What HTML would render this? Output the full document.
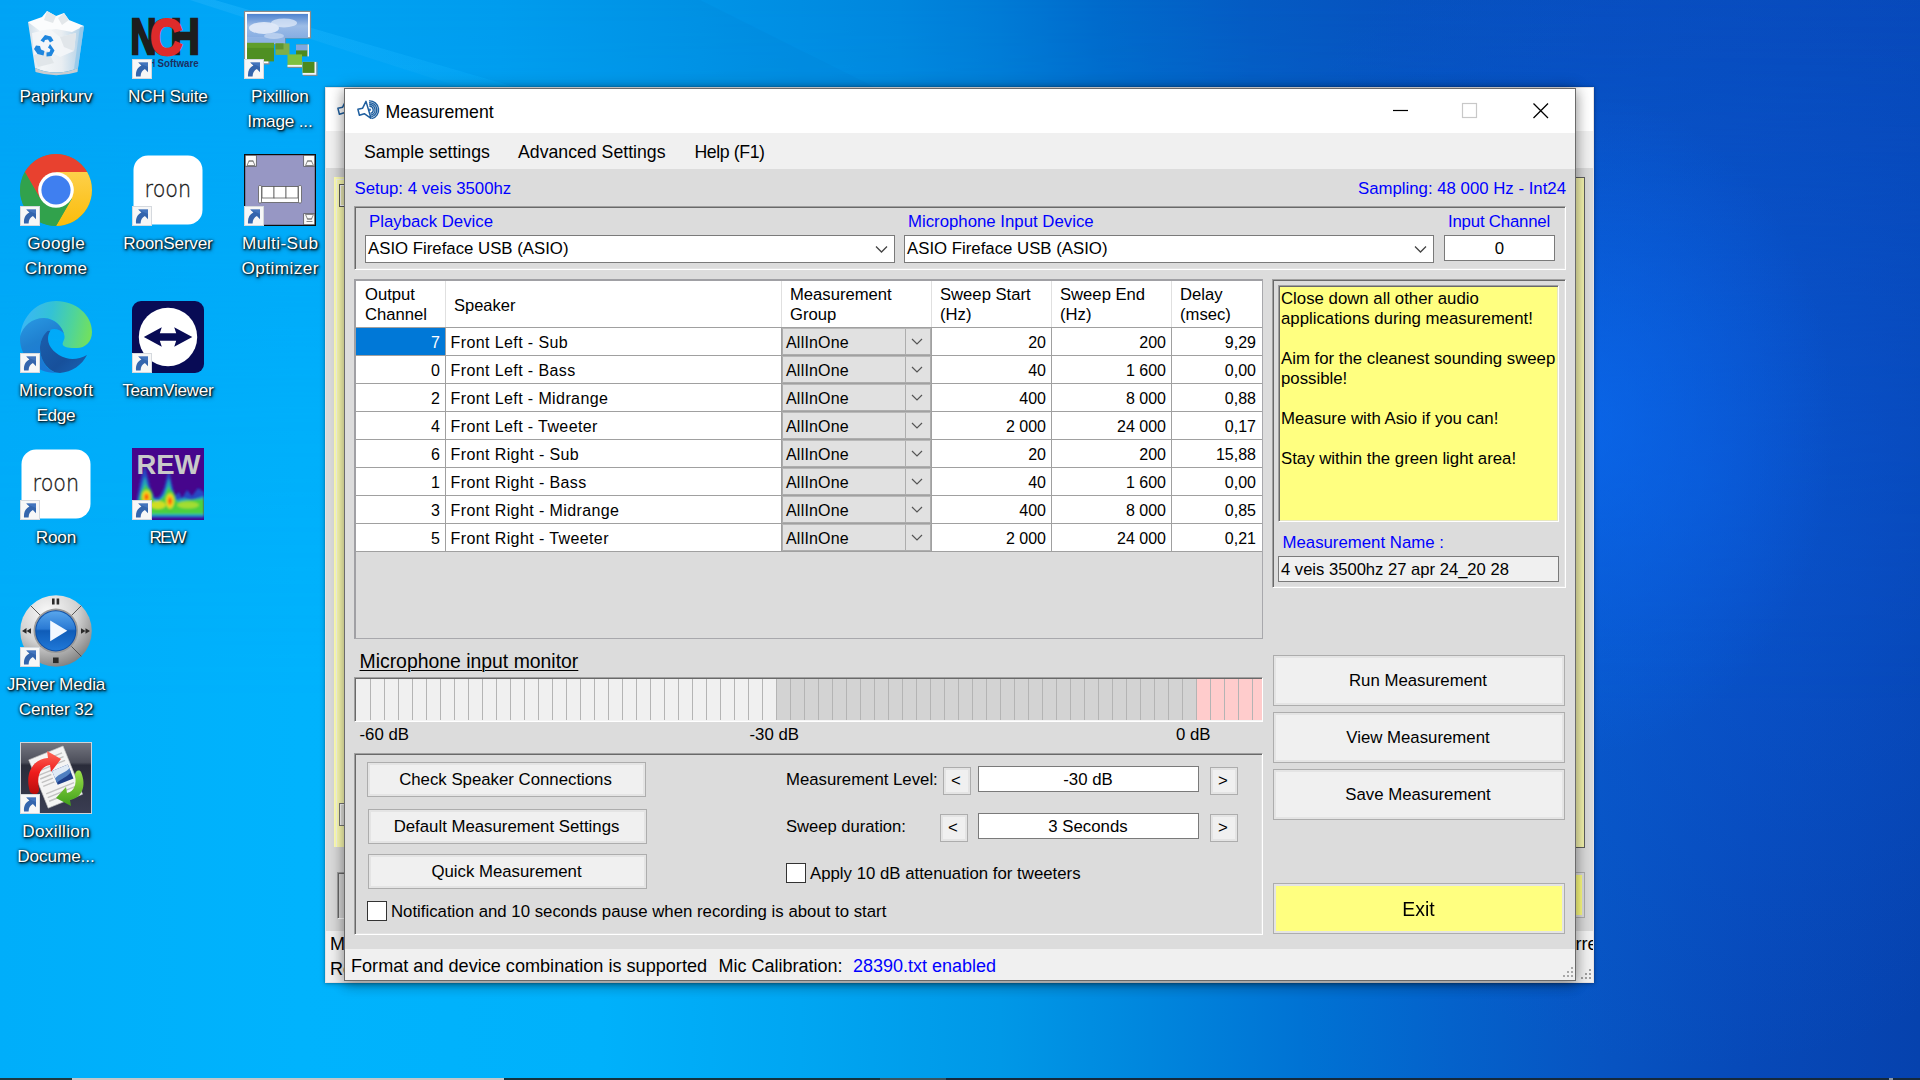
<!DOCTYPE html>
<html lang="en">
<head>
<meta charset="utf-8">
<title>Measurement</title>
<style>
*{box-sizing:border-box;margin:0;padding:0}
html,body{width:1920px;height:1080px;overflow:hidden}
body{position:relative;font-family:"Liberation Sans",sans-serif;font-size:16.8px;color:#000;
background:linear-gradient(90deg,#00aefa 0px,#00b3fd 300px,#00b1fb 600px,#00a6f2 800px,#0098e7 1000px,#0086dd 1150px,#0073d4 1300px,#0462cb 1450px,#0754c2 1600px,#0749b8 1750px,#0642ae 1920px);}
.sky{position:absolute;left:0;top:0;width:1920px;height:1080px;
 background:linear-gradient(90deg,#00a3f5 0px,#00a6f7 300px,#00a0f2 500px,#0094e7 700px,#0086dd 900px,#007ad5 1000px,#006acb 1100px,#045bc3 1250px,#0652bf 1400px,#074dbd 1600px,#0748b8 1920px);
 -webkit-mask-image:linear-gradient(180deg,#000 0px,rgba(0,0,0,.85) 120px,rgba(0,0,0,.25) 420px,rgba(0,0,0,0) 700px);
 mask-image:linear-gradient(180deg,#000 0px,rgba(0,0,0,.85) 120px,rgba(0,0,0,.25) 420px,rgba(0,0,0,0) 700px)}
.glow{position:absolute;left:0;top:0;width:1920px;height:1080px;
 background:radial-gradient(ellipse 250px 330px at 1585px 425px, rgba(10,110,248,.6), rgba(10,110,248,0) 100%),radial-gradient(ellipse 520px 600px at 1700px 470px, rgba(12,92,222,.55), rgba(12,92,222,0) 100%)}
.abs,.t,.win,.ico,.lbl,.btn,.sunk,.tb,.cell,.cb,.combo,.grp{position:absolute}
.t{white-space:pre}
.sg{font-size:17.7px}
.ico{width:72px;height:72px}
.ico svg{position:absolute;left:0;top:0;width:72px;height:72px;overflow:visible}
.lbl{width:130px;text-align:center;color:#fff;font-size:17.2px;line-height:25px;white-space:pre;
 text-shadow:1px 1px 2px rgba(0,0,0,.95),0 0 3px rgba(0,0,0,.75),1px 2px 4px rgba(0,0,0,.6)}
.win{background:#dcdcdc}
.btn{background:#f0f0f0;border:1px solid #adadad;box-shadow:inset 0 0 0 2px #e4e4e4;text-align:center;white-space:pre}
.sunk{border-style:solid;border-width:1px;border-color:#a0a0a0 #fff #fff #a0a0a0;box-shadow:inset 1px 1px 0 #696969,inset -1px -1px 0 #e3e3e3}
.tb{background:#fff;border:1px solid #7a7a7a;white-space:pre}
.cb{background:#fff;border:1px solid #333;width:20px;height:20px}
.cell{white-space:pre}
</style>
</head>
<body>
<div class="sky"></div><div class="glow"></div>
<svg class="abs" style="left:0;top:0" width="1920" height="1080" viewBox="0 0 1920 1080"><defs><linearGradient id="ray" x1="0" y1="0" x2="1" y2="0"><stop offset="0" stop-color="#7fd4ff" stop-opacity=".13"/><stop offset="1" stop-color="#7fd4ff" stop-opacity="0"/></linearGradient></defs><polygon points="190,0 215,0 560,100 500,100" fill="url(#ray)"/><polygon points="215,0 700,0 900,100 560,100" fill="#003a8c" opacity=".035"/></svg>
<div class="abs" style="left:0px;top:1078px;width:1920px;height:2px;background:#15293c"></div>
<div class="abs" style="left:0px;top:1078px;width:72px;height:2px;background:#1d3941"></div>
<div class="abs" style="left:72px;top:1078px;width:432px;height:2px;background:#c3c6c8"></div>
<div class="abs" style="left:504px;top:1078px;width:376px;height:2px;background:#13333e"></div>
<div class="abs" style="left:880px;top:1078px;width:66px;height:2px;background:#3a545f"></div>
<div class="abs" style="left:1889px;top:1078px;width:4px;height:2px;background:#8b97a7"></div>
<div class="ico" style="left:20px;top:7px"><svg viewBox="0 0 72 72"><defs><linearGradient id="bn1" x1="0" y1="0" x2="1" y2="0"><stop offset="0" stop-color="#cfdde8"/><stop offset=".25" stop-color="#f3f6f8"/><stop offset=".6" stop-color="#e9eef2"/><stop offset=".85" stop-color="#c2d9ea"/><stop offset="1" stop-color="#9fcdec"/></linearGradient></defs>
<path d="M8 15 L64 19 L58 61 Q36 70 15 61 Z" fill="url(#bn1)"/>
<path d="M15 61 Q36 70 58 61 L57.500 65 Q36 71.500 15.500 65 Z" fill="#c9ccd0"/>
<path d="M8 15 L22 10 L27 4 L36 9 L44 6 L49 13 L64 19 L52 25 L36 22 L20 24 Z" fill="#fbfcfd"/>
<path d="M27 4 L36 9 L33 16 L24 13Z M44 6 L49 13 L42 18 L38 11Z" fill="#e3e7ea"/>
<path d="M12 26 L30 22 L40 30 L56 26 L54 44 L40 50 L28 44 L14 48 Z" fill="#f4f6f8" opacity=".9"/>
<path d="M40 30 L56 26 L54 44 L44 40Z M14 48 L28 44 L34 56 L18 60Z" fill="#dfe4e8" opacity=".9"/>
<path d="M60 20 L64 19 L58 61 L54 62 Z" fill="#8ec5ea" opacity=".75"/>
<g fill="#1e86de"><path d="M20.500 33.500 l4.500-5.500 6 1.500 2.500 4 -3.500 2 -2-3 -3 .5 -1 2.500z"/><path d="M30 37 l4.500 6.500 -3 5.500 -5 .5 0-4 3-.5 1-2.500 -2.500-2z"/><path d="M16 38.500 l4 .5 1 3.500 3.500 1.500 -1 4.500 -6-1.500 -3.500-5z"/></g>
</svg></div>
<div class="lbl" style="left:-9px;top:83.54px"><span style="letter-spacing:0.03px;margin-right:-0.03px">Papirkurv</span></div>
<div class="ico" style="left:132px;top:7px"><svg viewBox="0 0 72 72">
<g font-family="Liberation Sans,sans-serif" font-weight="bold">
<text transform="translate(-1.600,47.300) scale(1,1.370)" font-size="36" fill="#1d1d1d" stroke="#1d1d1d" stroke-width="1.800">N</text>
<text transform="translate(38.600,47.300) scale(1.130,1.370)" font-size="36" fill="#1d1d1d" stroke="#1d1d1d" stroke-width="1.800">H</text>
<text transform="translate(18.400,47.600) scale(1.220,1.400)" font-size="36" fill="#de2b2b" stroke="#de2b2b" stroke-width="2.200">C</text>
<text x="25.600" y="60.400" font-size="10" fill="#1c2f62" textLength="41" lengthAdjust="spacingAndGlyphs">Software</text>
<text x="8" y="60.400" font-size="10" fill="#1c2f62" textLength="15" lengthAdjust="spacingAndGlyphs">NCH</text>
</g><g transform="translate(0,52)"><rect x="0.500" y="0.500" width="19" height="19" fill="#f7f7f7" stroke="#d5d9de" stroke-width="1"/><path d="M6.200 3.400 H16 V13.200 L12.900 10.100 C10.200 11.400 8.800 13.800 8.600 17.400 H4 C3.600 12 5.600 8.400 9.400 6.600 Z" fill="#3465ad"/><path d="M6.200 3.400 H16 V8 C12 6 9 5.500 6.200 3.400Z" fill="#4a7cc4" opacity=".7"/></g></svg></div>
<div class="lbl" style="left:103px;top:83.54px"><span style="letter-spacing:-0.17px;margin-right:0.17px">NCH Suite</span></div>
<div class="ico" style="left:244px;top:7px"><svg viewBox="0 0 72 72"><defs><linearGradient id="sky1" x1="0" y1="0" x2="0" y2="1"><stop offset="0" stop-color="#4d82cf"/><stop offset=".5" stop-color="#9dbce6"/><stop offset="1" stop-color="#86ade2"/></linearGradient></defs>
<g transform="translate(0,0.900)"><path d="M0.500 3.500 H66.500 V30 H41 V36 H25 V56 H0.500 Z" fill="#fff" stroke="#8a8a8a" stroke-width="1.200"/>
<rect x="3" y="6" width="61" height="24" fill="url(#sky1)"/><rect x="3" y="30" width="38" height="6" fill="#8fb4e4"/>
<ellipse cx="20" cy="20" rx="15" ry="6" fill="#edf3fb" opacity=".8"/><ellipse cx="40" cy="15" rx="13" ry="4.500" fill="#dfe9f8" opacity=".75"/><ellipse cx="30" cy="28" rx="10" ry="3" fill="#c9daf2" opacity=".7"/>
<rect x="3" y="35" width="27" height="18.500" fill="#4f8f22"/><rect x="3" y="35" width="27" height="5" fill="#5f9e2a"/><rect x="25" y="45" width="5" height="9" fill="#00a8f5" opacity="0"/>
<rect x="31.500" y="35.500" width="14" height="11.500" fill="#7fae48"/><rect x="31.500" y="35.500" width="8" height="6" fill="#5e9330"/>
<rect x="52" y="36.500" width="11.500" height="12" fill="#4d8a20"/><rect x="52" y="36.500" width="11.500" height="6" fill="#7fa7e0"/><rect x="63.500" y="36.500" width="1.500" height="12" fill="#e8e8e8"/>
<rect x="43.500" y="46.500" width="14.500" height="12.500" fill="#7fc03e"/><rect x="43.500" y="57" width="14.500" height="2" fill="#f4f4f4"/><rect x="43.500" y="59" width="14.500" height="1" fill="#8a8a8a"/>
<rect x="58.500" y="54" width="14" height="13" fill="#f4f4f4"/><rect x="58.500" y="54" width="12" height="11" fill="#4c8a1f"/><rect x="59" y="67" width="14" height="1" fill="#8a8a8a"/><rect x="72.500" y="54" width="1" height="14" fill="#8a8a8a"/>
</g><g transform="translate(0,52)"><rect x="0.500" y="0.500" width="19" height="19" fill="#f7f7f7" stroke="#d5d9de" stroke-width="1"/><path d="M6.200 3.400 H16 V13.200 L12.900 10.100 C10.200 11.400 8.800 13.800 8.600 17.400 H4 C3.600 12 5.600 8.400 9.400 6.600 Z" fill="#3465ad"/><path d="M6.200 3.400 H16 V8 C12 6 9 5.500 6.200 3.400Z" fill="#4a7cc4" opacity=".7"/></g></svg></div>
<div class="lbl" style="left:215px;top:83.54px"><span style="letter-spacing:-0.05px;margin-right:0.05px">Pixillion</span>
<span style="letter-spacing:-0.18px;margin-right:0.18px">Image ...</span></div>
<div class="ico" style="left:20px;top:154px"><svg viewBox="0 0 72 72"><defs><linearGradient id="cy" x1="0" y1="0" x2="0" y2="1"><stop offset="0" stop-color="#fdd04a"/><stop offset="1" stop-color="#fbbc0a"/></linearGradient></defs>
<circle cx="36" cy="36" r="35.900" fill="#34a853"/>
<path d="M36 18 H67.180 A36 36 0 0 0 4.820 18 L20.410 45 Z" fill="#e8412f"/>
<path d="M51.590 45 L36 72 A36 36 0 0 0 67.180 18 H36 Z" fill="url(#cy)"/>
<path d="M20.410 45 L4.820 18 A36 36 0 0 0 36 72 L51.590 45 Z" fill="#31a24c"/>
<circle cx="36" cy="36" r="17.800" fill="#fff"/><circle cx="36" cy="36" r="14.600" fill="#3f7ff0"/><g transform="translate(0,52)"><rect x="0.500" y="0.500" width="19" height="19" fill="#f7f7f7" stroke="#d5d9de" stroke-width="1"/><path d="M6.200 3.400 H16 V13.200 L12.900 10.100 C10.200 11.400 8.800 13.800 8.600 17.400 H4 C3.600 12 5.600 8.400 9.400 6.600 Z" fill="#3465ad"/><path d="M6.200 3.400 H16 V8 C12 6 9 5.500 6.200 3.400Z" fill="#4a7cc4" opacity=".7"/></g></svg></div>
<div class="lbl" style="left:-9px;top:230.54px"><span style="letter-spacing:0.41px;margin-right:-0.41px">Google</span>
<span style="letter-spacing:0.23px;margin-right:-0.23px">Chrome</span></div>
<div class="ico" style="left:132px;top:154px"><svg viewBox="0 0 72 72"><rect x="1.500" y="1.500" width="69" height="69" rx="14.500" fill="#fff"/>
<text x="12.600" y="42.800" font-family="DejaVu Sans,Liberation Sans,sans-serif" font-weight="200" font-size="22.800" fill="#1a1a1a" stroke="#1a1a1a" stroke-width=".350" textLength="46.500" lengthAdjust="spacingAndGlyphs">roon</text><g transform="translate(0,52)"><rect x="0.500" y="0.500" width="19" height="19" fill="#f7f7f7" stroke="#d5d9de" stroke-width="1"/><path d="M6.200 3.400 H16 V13.200 L12.900 10.100 C10.200 11.400 8.800 13.800 8.600 17.400 H4 C3.600 12 5.600 8.400 9.400 6.600 Z" fill="#3465ad"/><path d="M6.200 3.400 H16 V8 C12 6 9 5.500 6.200 3.400Z" fill="#4a7cc4" opacity=".7"/></g></svg></div>
<div class="lbl" style="left:103px;top:230.54px"><span style="letter-spacing:-0.25px;margin-right:0.25px">RoonServer</span></div>
<div class="ico" style="left:244px;top:154px"><svg viewBox="0 0 72 72"><rect x="0.600" y="0.600" width="70.800" height="70.800" fill="#9797c4" stroke="#0c0c0c" stroke-width="1.200"/>
<g fill="#fafafa" stroke="#4a4a4a" stroke-width=".7"><rect x="1.300" y="1.300" width="11" height="11"/><rect x="59.700" y="1.300" width="11" height="11"/><rect x="59.700" y="59.700" width="11" height="11"/></g>
<g fill="none" stroke="#6a6a6a" stroke-width=".8"><path d="M3 11.500 l2-4.500 h4 l2 4.500z M4.500 7 h5"/><path d="M61.500 11.500 l2-4.500 h4 l2 4.500z M63 7 h5"/><path d="M61.500 60.500 l2 4.500 h4 l2-4.500z M63 65 h5 M62.500 67.500 h6"/></g>
<g fill="#fff" stroke="#5c5c5c" stroke-width=".8"><rect x="17" y="32.500" width="38" height="16" /><rect x="18" y="32.500" width="12" height="11.500"/><rect x="30" y="32.500" width="12" height="11.500"/><rect x="42" y="32.500" width="12" height="11.500"/><rect x="14.500" y="31.500" width="3" height="17.500" rx="1.200"/><rect x="54.500" y="31.500" width="3" height="17.500" rx="1.200"/></g><g transform="translate(0,52)"><rect x="0.500" y="0.500" width="19" height="19" fill="#f7f7f7" stroke="#d5d9de" stroke-width="1"/><path d="M6.200 3.400 H16 V13.200 L12.900 10.100 C10.200 11.400 8.800 13.800 8.600 17.400 H4 C3.600 12 5.600 8.400 9.400 6.600 Z" fill="#3465ad"/><path d="M6.200 3.400 H16 V8 C12 6 9 5.500 6.200 3.400Z" fill="#4a7cc4" opacity=".7"/></g></svg></div>
<div class="lbl" style="left:215px;top:230.54px"><span style="letter-spacing:0.42px;margin-right:-0.42px">Multi-Sub</span>
<span style="letter-spacing:0.44px;margin-right:-0.44px">Optimizer</span></div>
<div class="ico" style="left:20px;top:301px"><svg viewBox="0 0 72 72"><defs>
<linearGradient id="eA" x1="0" y1=".4" x2="1" y2=".55"><stop offset="0" stop-color="#3bb6f6"/><stop offset=".4" stop-color="#33c2d6"/><stop offset=".72" stop-color="#4fd49a"/><stop offset="1" stop-color="#72e05e"/></linearGradient>
<linearGradient id="eB" x1="0" y1="0" x2=".4" y2="1"><stop offset="0" stop-color="#2a9ae4"/><stop offset=".5" stop-color="#1f80d0"/><stop offset="1" stop-color="#1a78d6"/></linearGradient>
<linearGradient id="eC" x1="0" y1="0" x2="1" y2="1"><stop offset="0" stop-color="#1b5fae"/><stop offset=".6" stop-color="#17509b"/><stop offset="1" stop-color="#1a63b4"/></linearGradient></defs>
<path d="M0 38 C1 24 12 16.500 24 17 C34 17.500 42 24 44.500 33 C40 28 34 27 30 29 C24 32 20 40 20 47 C20 60 28 70 37 72 C16 72.500 0 56 0 38 Z" fill="url(#eB)"/>
<path d="M0.300 35 C2 15 17 0 36 0 C56 0 72 14 72 31 C72 41 65 47 57 47 C50 47 43.500 46.500 42.700 43.500 C42.200 41 45 39 44.500 35 C43 25 34 17 24 17 C12 17 3 25 0.300 35 Z" fill="url(#eA)"/>
<path d="M27.500 30 C22 35 20 42 20 47 C20 61 30 72 40 72 C52 71 62 64 67 54 C60 58 52 59 46 57 C36 54 28 46 28 38 C28 35 28.500 32.500 30.500 29.500 Z" fill="url(#eC)"/>
<g transform="translate(0,52)"><rect x="0.500" y="0.500" width="19" height="19" fill="#f7f7f7" stroke="#d5d9de" stroke-width="1"/><path d="M6.200 3.400 H16 V13.200 L12.900 10.100 C10.200 11.400 8.800 13.800 8.600 17.400 H4 C3.600 12 5.600 8.400 9.400 6.600 Z" fill="#3465ad"/><path d="M6.200 3.400 H16 V8 C12 6 9 5.500 6.200 3.400Z" fill="#4a7cc4" opacity=".7"/></g></svg></div>
<div class="lbl" style="left:-9px;top:377.54px"><span style="letter-spacing:0.56px;margin-right:-0.56px">Microsoft</span>
<span style="letter-spacing:-0.41px;margin-right:0.41px">Edge</span></div>
<div class="ico" style="left:132px;top:301px"><svg viewBox="0 0 72 72"><rect x="0" y="0" width="72" height="72" rx="9" fill="#080b55"/><circle cx="36" cy="36" r="29.200" fill="#fff"/>
<path d="M11.800 36 L29.800 26.300 L27.800 32.300 H44.200 L42.200 26.300 L60.300 36 L42.200 45.800 L44.200 39.800 H27.800 L29.800 45.800 Z" fill="#080b55"/><g transform="translate(0,52)"><rect x="0.500" y="0.500" width="19" height="19" fill="#f7f7f7" stroke="#d5d9de" stroke-width="1"/><path d="M6.200 3.400 H16 V13.200 L12.900 10.100 C10.200 11.400 8.800 13.800 8.600 17.400 H4 C3.600 12 5.600 8.400 9.400 6.600 Z" fill="#3465ad"/><path d="M6.200 3.400 H16 V8 C12 6 9 5.500 6.200 3.400Z" fill="#4a7cc4" opacity=".7"/></g></svg></div>
<div class="lbl" style="left:103px;top:377.54px"><span style="letter-spacing:-0.33px;margin-right:0.33px">TeamViewer</span></div>
<div class="ico" style="left:20px;top:448px"><svg viewBox="0 0 72 72"><rect x="1.500" y="1.500" width="69" height="69" rx="14.500" fill="#fff"/>
<text x="12.600" y="42.800" font-family="DejaVu Sans,Liberation Sans,sans-serif" font-weight="200" font-size="22.800" fill="#1a1a1a" stroke="#1a1a1a" stroke-width=".350" textLength="46.500" lengthAdjust="spacingAndGlyphs">roon</text><g transform="translate(0,52)"><rect x="0.500" y="0.500" width="19" height="19" fill="#f7f7f7" stroke="#d5d9de" stroke-width="1"/><path d="M6.200 3.400 H16 V13.200 L12.900 10.100 C10.200 11.400 8.800 13.800 8.600 17.400 H4 C3.600 12 5.600 8.400 9.400 6.600 Z" fill="#3465ad"/><path d="M6.200 3.400 H16 V8 C12 6 9 5.500 6.200 3.400Z" fill="#4a7cc4" opacity=".7"/></g></svg></div>
<div class="lbl" style="left:-9px;top:524.54px"><span style="letter-spacing:-0.17px;margin-right:0.17px">Roon</span></div>
<div class="ico" style="left:132px;top:448px"><svg viewBox="0 0 72 72"><defs>
<radialGradient id="h1"><stop offset="0" stop-color="#f02010"/><stop offset=".28" stop-color="#ff9a10"/><stop offset=".5" stop-color="#f0e020"/><stop offset=".78" stop-color="#40cc40"/><stop offset="1" stop-color="#40cc40" stop-opacity="0"/></radialGradient>
<filter id="bl" x="-20%" y="-20%" width="140%" height="140%"><feGaussianBlur stdDeviation="1.200"/></filter>
<clipPath id="rc"><rect width="72" height="72"/></clipPath></defs>
<rect width="72" height="72" fill="#46058c"/>
<g filter="url(#bl)" clip-path="url(#rc)"><path d="M2 70 L5 50 L8 34 L10 26 L13 18 L16 30 L19 42 L23 50 L28 48 L32 40 L35 28 L37 22 L40 36 L43 48 L47 44 L50 50 L55 42 L60 48 L66 40 L72 44 V70 Z" fill="#2350c8" opacity=".9"/>
<path d="M4 68 L7 50 L10 38 L13 28 L16 40 L20 50 L27 52 L32 46 L35 36 L37 30 L40 44 L44 52 L52 50 L60 52 L72 48 V68 Z" fill="#22a8b8"/>
<path d="M5 66 L8 50 L11 42 L14 36 L18 48 L24 54 L31 50 L35 42 L37 38 L40 48 L46 54 L56 52 L72 51 V66 Z" fill="#4cd040"/>
<ellipse cx="14.500" cy="49" rx="7" ry="10.500" fill="url(#h1)"/><ellipse cx="38" cy="53" rx="6.500" ry="12" fill="url(#h1)"/>
<ellipse cx="26" cy="57" rx="8" ry="4" fill="#e8e020" opacity=".85"/><ellipse cx="56" cy="57" rx="11" ry="3.500" fill="#b8e030" opacity=".8"/></g>
<text x="36.500" y="26" font-family="Liberation Sans,sans-serif" font-weight="bold" font-size="27" fill="#c9c9c9" text-anchor="middle" textLength="64" lengthAdjust="spacingAndGlyphs">REW</text><g transform="translate(0,52)"><rect x="0.500" y="0.500" width="19" height="19" fill="#f7f7f7" stroke="#d5d9de" stroke-width="1"/><path d="M6.200 3.400 H16 V13.200 L12.900 10.100 C10.200 11.400 8.800 13.800 8.600 17.400 H4 C3.600 12 5.600 8.400 9.400 6.600 Z" fill="#3465ad"/><path d="M6.200 3.400 H16 V8 C12 6 9 5.500 6.200 3.400Z" fill="#4a7cc4" opacity=".7"/></g></svg></div>
<div class="lbl" style="left:103px;top:524.54px"><span style="letter-spacing:-1.5px;margin-right:1.5px">REW</span></div>
<div class="ico" style="left:20px;top:595px"><svg viewBox="0 0 72 72"><defs><radialGradient id="jr1" cx=".38" cy=".25" r=".85"><stop offset="0" stop-color="#fafafa"/><stop offset=".5" stop-color="#d2d2d2"/><stop offset=".85" stop-color="#8e8e8e"/><stop offset="1" stop-color="#6e6e6e"/></radialGradient>
<linearGradient id="jr2" x1="0" y1="0" x2="0" y2="1"><stop offset="0" stop-color="#58a6ec"/><stop offset=".45" stop-color="#2a7ad4"/><stop offset=".5" stop-color="#0f5cb8"/><stop offset="1" stop-color="#1f78d8"/></linearGradient></defs>
<circle cx="36" cy="36" r="35.800" fill="url(#jr1)"/>
<g stroke="#4a4a4a" stroke-width=".9"><path d="M10.700 10.700 L21 21M61.300 10.700 L51 21M61.300 61.300 L51 51M10.700 61.300 L21 51"/></g>
<circle cx="35.800" cy="35.800" r="22.300" fill="#9a9a9a"/><circle cx="35.800" cy="35.800" r="20.600" fill="#0d4ea6"/><circle cx="35.800" cy="35.800" r="19.600" fill="url(#jr2)"/>
<path d="M30.200 25.400 L47.300 35.800 L30.200 46.200Z" fill="#f2f8ff"/>
<g fill="#2a2a2a"><rect x="32" y="3.500" width="2.600" height="6"/><rect x="36.600" y="3.500" width="2.600" height="6"/><rect x="33" y="62.500" width="5.600" height="5.600"/>
<path d="M6.500 36 l-4.500 0 4.500-3z M6.500 33.300 v5.400 l-4.500-2.700z M11 33.300 v5.400 l-4.500-2.700z"/><path d="M61 33.300 v5.400 l4.500-2.700z M65.500 33.300 v5.400 l4.500-2.700z"/></g><g transform="translate(0,52)"><rect x="0.500" y="0.500" width="19" height="19" fill="#f7f7f7" stroke="#d5d9de" stroke-width="1"/><path d="M6.200 3.400 H16 V13.200 L12.900 10.100 C10.200 11.400 8.800 13.800 8.600 17.400 H4 C3.600 12 5.600 8.400 9.400 6.600 Z" fill="#3465ad"/><path d="M6.200 3.400 H16 V8 C12 6 9 5.500 6.200 3.400Z" fill="#4a7cc4" opacity=".7"/></g></svg></div>
<div class="lbl" style="left:-9px;top:671.54px"><span style="letter-spacing:-0.14px;margin-right:0.14px">JRiver Media</span>
<span style="letter-spacing:-0.13px;margin-right:0.13px">Center 32</span></div>
<div class="ico" style="left:20px;top:742px"><svg viewBox="0 0 72 72"><defs><linearGradient id="dx" x1="0" y1="0" x2="0" y2="1"><stop offset="0" stop-color="#747680"/><stop offset=".28" stop-color="#4c4e5a"/><stop offset=".32" stop-color="#2a2c3a"/><stop offset="1" stop-color="#3a3d52"/></linearGradient>
<linearGradient id="dr" x1="0" y1="0" x2="0" y2="1"><stop offset="0" stop-color="#ff6a5a"/><stop offset=".5" stop-color="#ee1c1c"/><stop offset="1" stop-color="#b80c0c"/></linearGradient>
<linearGradient id="dg" x1="0" y1="0" x2="0" y2="1"><stop offset="0" stop-color="#9be04a"/><stop offset="1" stop-color="#3f9e1a"/></linearGradient></defs>
<rect x="0.500" y="0.500" width="71" height="71" fill="url(#dx)" stroke="#d0d4d8" stroke-width="1"/>
<g transform="rotate(-22 36 36)"><rect x="17.500" y="9" width="37" height="52" fill="#f4f4f4" stroke="#c4c4c4" stroke-width=".6"/><g stroke="#c2c2c2" stroke-width="1.400"><path d="M21 15h30M21 19h30M21 23h30M21 27h14M21 31h12M21 35h12M21 39h12M21 47h30M21 51h30M21 55h22"/></g><rect x="35" y="28" width="17" height="15" fill="#1f3f88"/><path d="M35 28 h17 v6 c-6 3-11 1-17 4z" fill="#dfeaf6"/><path d="M35 36 c6-3 11-1 17-4 v4 c-6 4-11 2-17 5z" fill="#4f7fc0"/></g>
<path d="M10 50 C4 30 14 17 28 16 L27 9 L41 17 L31 30 L30 23 C22 24 16 32 19 47 C19.500 52 14 54 10 50Z" fill="url(#dr)"/>
<path d="M61 30 C67 44 62 56 50 58 L51 64 L36 56 L46 45 L47 51 C54 50 57 42 55 33 C55 29 59 27 61 30Z" fill="url(#dg)"/><g transform="translate(0,52)"><rect x="0.500" y="0.500" width="19" height="19" fill="#f7f7f7" stroke="#d5d9de" stroke-width="1"/><path d="M6.200 3.400 H16 V13.200 L12.900 10.100 C10.200 11.400 8.800 13.800 8.600 17.400 H4 C3.600 12 5.600 8.400 9.400 6.600 Z" fill="#3465ad"/><path d="M6.200 3.400 H16 V8 C12 6 9 5.500 6.200 3.400Z" fill="#4a7cc4" opacity=".7"/></g></svg></div>
<div class="lbl" style="left:-9px;top:818.54px"><span style="letter-spacing:0.31px;margin-right:-0.31px">Doxillion</span>
<span style="letter-spacing:-0.11px;margin-right:0.11px">Docume...</span></div>
<div class="win" style="left:325px;top:87px;width:1269px;height:896px;background:#d9d9d9;border:1px solid #e6e2e2;overflow:hidden;box-shadow:0 1px 5px rgba(0,0,0,.28),0 0 2px rgba(0,0,0,.22)">
<div class="abs" style="left:0px;top:0px;width:1267px;height:43px;background:#fff"></div>
<div class="abs" style="left:0px;top:43px;width:1267px;height:37px;background:#f0f0f0"></div>
<div class="abs" style="left:8px;top:89px;width:1242px;height:670px;background:#ffffb4;"></div>
<div class="abs" style="left:10px;top:91px;width:1240px;height:668px;background:#ffffb4;border-left:1px solid #f8f8ea;border-top:1px solid #f8f8ea"></div>
<div class="abs" style="left:1250px;top:89px;width:9px;height:671px;background:#f6f5ae;border:1px solid #5e5e5e;border-left:none"></div>
<div class="abs" style="left:13px;top:96px;width:14px;height:23px;background:#efeeb8;border:1px solid #5a5a5a;box-shadow:inset 1px 1px 0 #fff, inset -1px -1px 0 #fff"></div>
<div class="abs" style="left:13px;top:715px;width:14px;height:23px;background:#e6e6e0;border:1px solid #7a7a7a;box-shadow:inset 1px 1px 0 #fff"></div>
<div class="abs" style="left:11px;top:784px;width:20px;height:47px;border:1px solid #a0a0a0;border-right-color:#fff;border-bottom-color:#fff;box-shadow:inset 1px 1px 0 #696969;background:#d9d9d9"></div>
<div class="abs" style="left:1240px;top:784px;width:18.5px;height:46px;background:#ffff80;border:1px solid #adadad;box-shadow:inset 0 0 0 2px #dedede"></div>
<div class="abs" style="left:0px;top:843px;width:1267px;height:51px;background:#f0f0f0"></div>
<div class="t " style="left:4px;top:845.73px;font-size:18.1px;line-height:20px;color:#000;">Me</div>
<div class="t " style="left:4px;top:870.73px;font-size:18.1px;line-height:20px;color:#000;">Re</div>
<div class="t " style="left:1249.5px;top:845.73px;font-size:18.1px;line-height:20px;color:#000;">rrec</div>
<svg class="abs" style="left:10.600px;top:11.400px;overflow:visible" width="23" height="20" viewBox="0 0 23 20"><path d="M12.35 6.31A3.6 3.6 0 0 1 13.47 13.39M12.22 4.51A5.4 5.4 0 0 1 13.91 15.14M12.10 2.72A7.2 7.2 0 0 1 14.34 16.89M11.97 0.92A9.0 9.0 0 0 1 14.78 18.63" fill="none" stroke="#1f5f9f" stroke-width="1.400"/><circle cx="12.800" cy="9.700" r="1.300" fill="#3a7cc0"/><path d="M0.900 9.300 L5.500 8.300 L9 1.400 L14 18.300 L7.300 13.700 L2.400 15.300 Z" fill="#fff" stroke="#1f5f9f" stroke-width="1.500" stroke-linejoin="round"/></svg>
<svg class="abs" style="left:1255px;top:881px" width="12" height="12" viewBox="0 0 12 12"><g fill="#a0a0a0"><rect x="8" y="0" width="2" height="2"/><rect x="4" y="4" width="2" height="2"/><rect x="8" y="4" width="2" height="2"/><rect x="0" y="8" width="2" height="2"/><rect x="4" y="8" width="2" height="2"/><rect x="8" y="8" width="2" height="2"/></g></svg>
</div>
<div class="win" style="left:344px;top:88px;width:1232px;height:893px;border:1px solid #6b6b6b;box-shadow:0 0 14px rgba(0,0,0,.28),0 5px 12px rgba(0,0,0,.24)"></div>
<div class="abs" style="left:345px;top:89px;width:1230px;height:44px;background:#fff"></div>
<div class="abs" style="left:345px;top:133px;width:1230px;height:36px;background:#f0f0f0"></div>
<svg class="abs" style="left:357px;top:100px;overflow:visible" width="23" height="20" viewBox="0 0 23 20"><path d="M12.35 6.31A3.6 3.6 0 0 1 13.47 13.39M12.22 4.51A5.4 5.4 0 0 1 13.91 15.14M12.10 2.72A7.2 7.2 0 0 1 14.34 16.89M11.97 0.92A9.0 9.0 0 0 1 14.78 18.63" fill="none" stroke="#1f5f9f" stroke-width="1.400"/><circle cx="12.800" cy="9.700" r="1.300" fill="#3a7cc0"/><path d="M0.900 9.300 L5.500 8.300 L9 1.400 L14 18.300 L7.300 13.700 L2.400 15.300 Z" fill="#fff" stroke="#1f5f9f" stroke-width="1.500" stroke-linejoin="round"/></svg>
<div class="t sg" style="left:385.5px;top:102.37px;font-size:17.7px;line-height:20px;color:#000;">Measurement</div>
<svg class="abs" style="left:1380px;top:89px" width="195" height="44" viewBox="0 0 195 44"><path d="M13 21.500h15" stroke="#000" stroke-width="1.200"/><rect x="82.500" y="14.500" width="14" height="14" fill="none" stroke="#c8c8c8" stroke-width="1.200"/><path d="M153.500 14.500l14.500 14.500M168 14.500l-14.500 14.500" stroke="#000" stroke-width="1.300"/></svg>
<div class="t sg" style="left:364px;top:141.87px;font-size:17.7px;line-height:20px;color:#000;">Sample settings</div>
<div class="t sg" style="left:518px;top:141.87px;font-size:17.7px;line-height:20px;color:#000;">Advanced Settings</div>
<div class="t sg" style="left:694.5px;top:141.87px;font-size:17.7px;line-height:20px;color:#000;letter-spacing:-0.4px;">Help (F1)</div>
<div class="t " style="left:354.5px;top:179.18px;font-size:16.8px;line-height:20px;color:#0000ff;">Setup: 4 veis 3500hz</div>
<div class="t " style="left:1266px;top:179.18px;font-size:16.8px;line-height:20px;color:#0000ff;width:300px;text-align:right;">Sampling: 48 000 Hz - Int24</div>
<div class="sunk" style="left:354px;top:206px;width:1212px;height:64px;"></div>
<div class="t " style="left:369px;top:212.18px;font-size:16.8px;line-height:20px;color:#0000ff;">Playback Device</div>
<div class="t " style="left:908px;top:212.18px;font-size:16.8px;line-height:20px;color:#0000ff;">Microphone Input Device</div>
<div class="t " style="left:1448px;top:212.18px;font-size:16.8px;line-height:20px;color:#0000ff;letter-spacing:-0.19px;">Input Channel</div>
<div class="tb" style="left:365px;top:235px;width:530px;height:28px;"><svg class="abs" style="right:6px;top:9px" width="13" height="9" viewBox="0 0 13 9"><path d="M1 1.500l5.500 5.500 5.500-5.500" fill="none" stroke="#444" stroke-width="1.300"/></svg></div>
<div class="t " style="left:368px;top:239.18px;font-size:16.8px;line-height:20px;color:#000;">ASIO Fireface USB (ASIO)</div>
<div class="tb" style="left:904px;top:235px;width:530px;height:28px;"><svg class="abs" style="right:6px;top:9px" width="13" height="9" viewBox="0 0 13 9"><path d="M1 1.500l5.500 5.500 5.500-5.500" fill="none" stroke="#444" stroke-width="1.300"/></svg></div>
<div class="t " style="left:907px;top:239.18px;font-size:16.8px;line-height:20px;color:#000;">ASIO Fireface USB (ASIO)</div>
<div class="tb" style="left:1444px;top:235px;width:111px;height:26px;"></div>
<div class="t " style="left:1199.5px;top:238.68px;font-size:16.8px;line-height:20px;color:#000;width:600px;text-align:center;">0</div>
<div class="abs" style="left:354px;top:279px;width:909px;height:360px;border:2px solid #a0a0a4;border-right:1px solid #a8a8ac;border-bottom:1px solid #a8a8ac;background:#dcdcdc"></div>
<div class="abs" style="left:356px;top:281px;width:906px;height:47px;background:#fff;border-bottom:1px solid #a0a0a0"></div>
<div class="abs" style="left:445px;top:281px;width:1px;height:46px;background:#e0e0e0"></div>
<div class="abs" style="left:781px;top:281px;width:1px;height:46px;background:#e0e0e0"></div>
<div class="abs" style="left:931px;top:281px;width:1px;height:46px;background:#e0e0e0"></div>
<div class="abs" style="left:1051px;top:281px;width:1px;height:46px;background:#e0e0e0"></div>
<div class="abs" style="left:1171px;top:281px;width:1px;height:46px;background:#e0e0e0"></div>
<div class="t " style="left:365px;top:285.23px;font-size:16.65px;line-height:20px;color:#000;">Output</div>
<div class="t " style="left:365px;top:305.23px;font-size:16.65px;line-height:20px;color:#000;">Channel</div>
<div class="t " style="left:790px;top:285.23px;font-size:16.65px;line-height:20px;color:#000;">Measurement</div>
<div class="t " style="left:790px;top:305.23px;font-size:16.65px;line-height:20px;color:#000;">Group</div>
<div class="t " style="left:940px;top:285.23px;font-size:16.65px;line-height:20px;color:#000;">Sweep Start</div>
<div class="t " style="left:940px;top:305.23px;font-size:16.65px;line-height:20px;color:#000;">(Hz)</div>
<div class="t " style="left:1060px;top:285.23px;font-size:16.65px;line-height:20px;color:#000;">Sweep End</div>
<div class="t " style="left:1060px;top:305.23px;font-size:16.65px;line-height:20px;color:#000;">(Hz)</div>
<div class="t " style="left:1180px;top:285.23px;font-size:16.65px;line-height:20px;color:#000;">Delay</div>
<div class="t " style="left:1180px;top:305.23px;font-size:16.65px;line-height:20px;color:#000;">(msec)</div>
<div class="t " style="left:454px;top:295.28px;font-size:16.5px;line-height:20px;color:#000;">Speaker</div>
<div class="abs" style="left:356px;top:328px;width:906px;height:224px;background:#fff"></div>
<div class="abs" style="left:356px;top:328px;width:89px;height:27px;background:#0078d7"></div>
<div class="abs" style="left:782px;top:328px;width:149px;height:27px;background:#e1e1e1;border:1px solid #adadad;border-top-color:#b8b8b8"></div>
<div class="abs" style="left:905px;top:329px;width:1px;height:25px;background:#adadad"></div>
<svg class="abs" style="left:911px;top:337.5px" width="12" height="8" viewBox="0 0 12 8"><path d="M1 1l5 5 5-5" fill="none" stroke="#555" stroke-width="1.200"/></svg>
<div class="abs" style="left:356px;top:355px;width:906px;height:1px;background:#a0a0a0"></div>
<div class="t " style="left:140px;top:332.96px;font-size:16.0px;line-height:20px;color:#fff;width:300px;text-align:right;">7</div>
<div class="t " style="left:450.5px;top:332.96px;font-size:16.0px;line-height:20px;color:#000;letter-spacing:0.4px;">Front Left - Sub</div>
<div class="t " style="left:786px;top:332.96px;font-size:16.0px;line-height:20px;color:#000;letter-spacing:0.2px;">AllInOne</div>
<div class="t " style="left:746px;top:332.96px;font-size:16.0px;line-height:20px;color:#000;width:300px;text-align:right;">20</div>
<div class="t " style="left:866px;top:332.96px;font-size:16.0px;line-height:20px;color:#000;width:300px;text-align:right;">200</div>
<div class="t " style="left:956px;top:332.96px;font-size:16.0px;line-height:20px;color:#000;width:300px;text-align:right;">9,29</div>
<div class="abs" style="left:782px;top:356px;width:149px;height:27px;background:#e1e1e1;border:1px solid #adadad;border-top-color:#b8b8b8"></div>
<div class="abs" style="left:905px;top:357px;width:1px;height:25px;background:#adadad"></div>
<svg class="abs" style="left:911px;top:365.5px" width="12" height="8" viewBox="0 0 12 8"><path d="M1 1l5 5 5-5" fill="none" stroke="#555" stroke-width="1.200"/></svg>
<div class="abs" style="left:356px;top:383px;width:906px;height:1px;background:#a0a0a0"></div>
<div class="t " style="left:140px;top:360.96px;font-size:16.0px;line-height:20px;color:#000;width:300px;text-align:right;">0</div>
<div class="t " style="left:450.5px;top:360.96px;font-size:16.0px;line-height:20px;color:#000;letter-spacing:0.4px;">Front Left - Bass</div>
<div class="t " style="left:786px;top:360.96px;font-size:16.0px;line-height:20px;color:#000;letter-spacing:0.2px;">AllInOne</div>
<div class="t " style="left:746px;top:360.96px;font-size:16.0px;line-height:20px;color:#000;width:300px;text-align:right;">40</div>
<div class="t " style="left:866px;top:360.96px;font-size:16.0px;line-height:20px;color:#000;width:300px;text-align:right;">1 600</div>
<div class="t " style="left:956px;top:360.96px;font-size:16.0px;line-height:20px;color:#000;width:300px;text-align:right;">0,00</div>
<div class="abs" style="left:782px;top:384px;width:149px;height:27px;background:#e1e1e1;border:1px solid #adadad;border-top-color:#b8b8b8"></div>
<div class="abs" style="left:905px;top:385px;width:1px;height:25px;background:#adadad"></div>
<svg class="abs" style="left:911px;top:393.5px" width="12" height="8" viewBox="0 0 12 8"><path d="M1 1l5 5 5-5" fill="none" stroke="#555" stroke-width="1.200"/></svg>
<div class="abs" style="left:356px;top:411px;width:906px;height:1px;background:#a0a0a0"></div>
<div class="t " style="left:140px;top:388.96px;font-size:16.0px;line-height:20px;color:#000;width:300px;text-align:right;">2</div>
<div class="t " style="left:450.5px;top:388.96px;font-size:16.0px;line-height:20px;color:#000;letter-spacing:0.4px;">Front Left - Midrange</div>
<div class="t " style="left:786px;top:388.96px;font-size:16.0px;line-height:20px;color:#000;letter-spacing:0.2px;">AllInOne</div>
<div class="t " style="left:746px;top:388.96px;font-size:16.0px;line-height:20px;color:#000;width:300px;text-align:right;">400</div>
<div class="t " style="left:866px;top:388.96px;font-size:16.0px;line-height:20px;color:#000;width:300px;text-align:right;">8 000</div>
<div class="t " style="left:956px;top:388.96px;font-size:16.0px;line-height:20px;color:#000;width:300px;text-align:right;">0,88</div>
<div class="abs" style="left:782px;top:412px;width:149px;height:27px;background:#e1e1e1;border:1px solid #adadad;border-top-color:#b8b8b8"></div>
<div class="abs" style="left:905px;top:413px;width:1px;height:25px;background:#adadad"></div>
<svg class="abs" style="left:911px;top:421.5px" width="12" height="8" viewBox="0 0 12 8"><path d="M1 1l5 5 5-5" fill="none" stroke="#555" stroke-width="1.200"/></svg>
<div class="abs" style="left:356px;top:439px;width:906px;height:1px;background:#a0a0a0"></div>
<div class="t " style="left:140px;top:416.96px;font-size:16.0px;line-height:20px;color:#000;width:300px;text-align:right;">4</div>
<div class="t " style="left:450.5px;top:416.96px;font-size:16.0px;line-height:20px;color:#000;letter-spacing:0.4px;">Front Left - Tweeter</div>
<div class="t " style="left:786px;top:416.96px;font-size:16.0px;line-height:20px;color:#000;letter-spacing:0.2px;">AllInOne</div>
<div class="t " style="left:746px;top:416.96px;font-size:16.0px;line-height:20px;color:#000;width:300px;text-align:right;">2 000</div>
<div class="t " style="left:866px;top:416.96px;font-size:16.0px;line-height:20px;color:#000;width:300px;text-align:right;">24 000</div>
<div class="t " style="left:956px;top:416.96px;font-size:16.0px;line-height:20px;color:#000;width:300px;text-align:right;">0,17</div>
<div class="abs" style="left:782px;top:440px;width:149px;height:27px;background:#e1e1e1;border:1px solid #adadad;border-top-color:#b8b8b8"></div>
<div class="abs" style="left:905px;top:441px;width:1px;height:25px;background:#adadad"></div>
<svg class="abs" style="left:911px;top:449.5px" width="12" height="8" viewBox="0 0 12 8"><path d="M1 1l5 5 5-5" fill="none" stroke="#555" stroke-width="1.200"/></svg>
<div class="abs" style="left:356px;top:467px;width:906px;height:1px;background:#a0a0a0"></div>
<div class="t " style="left:140px;top:444.96px;font-size:16.0px;line-height:20px;color:#000;width:300px;text-align:right;">6</div>
<div class="t " style="left:450.5px;top:444.96px;font-size:16.0px;line-height:20px;color:#000;letter-spacing:0.4px;">Front Right - Sub</div>
<div class="t " style="left:786px;top:444.96px;font-size:16.0px;line-height:20px;color:#000;letter-spacing:0.2px;">AllInOne</div>
<div class="t " style="left:746px;top:444.96px;font-size:16.0px;line-height:20px;color:#000;width:300px;text-align:right;">20</div>
<div class="t " style="left:866px;top:444.96px;font-size:16.0px;line-height:20px;color:#000;width:300px;text-align:right;">200</div>
<div class="t " style="left:956px;top:444.96px;font-size:16.0px;line-height:20px;color:#000;width:300px;text-align:right;">15,88</div>
<div class="abs" style="left:782px;top:468px;width:149px;height:27px;background:#e1e1e1;border:1px solid #adadad;border-top-color:#b8b8b8"></div>
<div class="abs" style="left:905px;top:469px;width:1px;height:25px;background:#adadad"></div>
<svg class="abs" style="left:911px;top:477.5px" width="12" height="8" viewBox="0 0 12 8"><path d="M1 1l5 5 5-5" fill="none" stroke="#555" stroke-width="1.200"/></svg>
<div class="abs" style="left:356px;top:495px;width:906px;height:1px;background:#a0a0a0"></div>
<div class="t " style="left:140px;top:472.96px;font-size:16.0px;line-height:20px;color:#000;width:300px;text-align:right;">1</div>
<div class="t " style="left:450.5px;top:472.96px;font-size:16.0px;line-height:20px;color:#000;letter-spacing:0.4px;">Front Right - Bass</div>
<div class="t " style="left:786px;top:472.96px;font-size:16.0px;line-height:20px;color:#000;letter-spacing:0.2px;">AllInOne</div>
<div class="t " style="left:746px;top:472.96px;font-size:16.0px;line-height:20px;color:#000;width:300px;text-align:right;">40</div>
<div class="t " style="left:866px;top:472.96px;font-size:16.0px;line-height:20px;color:#000;width:300px;text-align:right;">1 600</div>
<div class="t " style="left:956px;top:472.96px;font-size:16.0px;line-height:20px;color:#000;width:300px;text-align:right;">0,00</div>
<div class="abs" style="left:782px;top:496px;width:149px;height:27px;background:#e1e1e1;border:1px solid #adadad;border-top-color:#b8b8b8"></div>
<div class="abs" style="left:905px;top:497px;width:1px;height:25px;background:#adadad"></div>
<svg class="abs" style="left:911px;top:505.5px" width="12" height="8" viewBox="0 0 12 8"><path d="M1 1l5 5 5-5" fill="none" stroke="#555" stroke-width="1.200"/></svg>
<div class="abs" style="left:356px;top:523px;width:906px;height:1px;background:#a0a0a0"></div>
<div class="t " style="left:140px;top:500.96px;font-size:16.0px;line-height:20px;color:#000;width:300px;text-align:right;">3</div>
<div class="t " style="left:450.5px;top:500.96px;font-size:16.0px;line-height:20px;color:#000;letter-spacing:0.4px;">Front Right - Midrange</div>
<div class="t " style="left:786px;top:500.96px;font-size:16.0px;line-height:20px;color:#000;letter-spacing:0.2px;">AllInOne</div>
<div class="t " style="left:746px;top:500.96px;font-size:16.0px;line-height:20px;color:#000;width:300px;text-align:right;">400</div>
<div class="t " style="left:866px;top:500.96px;font-size:16.0px;line-height:20px;color:#000;width:300px;text-align:right;">8 000</div>
<div class="t " style="left:956px;top:500.96px;font-size:16.0px;line-height:20px;color:#000;width:300px;text-align:right;">0,85</div>
<div class="abs" style="left:782px;top:524px;width:149px;height:27px;background:#e1e1e1;border:1px solid #adadad;border-top-color:#b8b8b8"></div>
<div class="abs" style="left:905px;top:525px;width:1px;height:25px;background:#adadad"></div>
<svg class="abs" style="left:911px;top:533.5px" width="12" height="8" viewBox="0 0 12 8"><path d="M1 1l5 5 5-5" fill="none" stroke="#555" stroke-width="1.200"/></svg>
<div class="abs" style="left:356px;top:551px;width:906px;height:1px;background:#a0a0a0"></div>
<div class="t " style="left:140px;top:528.96px;font-size:16.0px;line-height:20px;color:#000;width:300px;text-align:right;">5</div>
<div class="t " style="left:450.5px;top:528.96px;font-size:16.0px;line-height:20px;color:#000;letter-spacing:0.4px;">Front Right - Tweeter</div>
<div class="t " style="left:786px;top:528.96px;font-size:16.0px;line-height:20px;color:#000;letter-spacing:0.2px;">AllInOne</div>
<div class="t " style="left:746px;top:528.96px;font-size:16.0px;line-height:20px;color:#000;width:300px;text-align:right;">2 000</div>
<div class="t " style="left:866px;top:528.96px;font-size:16.0px;line-height:20px;color:#000;width:300px;text-align:right;">24 000</div>
<div class="t " style="left:956px;top:528.96px;font-size:16.0px;line-height:20px;color:#000;width:300px;text-align:right;">0,21</div>
<div class="abs" style="left:445px;top:328px;width:1px;height:224px;background:#a0a0a0"></div>
<div class="abs" style="left:781px;top:328px;width:1px;height:224px;background:#a0a0a0"></div>
<div class="abs" style="left:931px;top:328px;width:1px;height:224px;background:#a0a0a0"></div>
<div class="abs" style="left:1051px;top:328px;width:1px;height:224px;background:#a0a0a0"></div>
<div class="abs" style="left:1171px;top:328px;width:1px;height:224px;background:#a0a0a0"></div>
<div class="t " style="left:359.5px;top:650.78px;font-size:19.4px;line-height:20px;color:#000;text-decoration:underline;text-decoration-thickness:1px;text-underline-offset:2px;">Microphone input monitor</div>
<div class="abs" style="left:354px;top:677px;width:909px;height:45px;border:1px solid;border-color:#a0a0a0 #fff #fff #a0a0a0;box-shadow:inset 1px 1px 0 #696969,inset 0 -1px 0 #f4f4f4;background:#f0f0f0"></div>
<div class="abs" style="left:776px;top:679px;width:421px;height:41px;background:#d3d3d3"></div>
<div class="abs" style="left:1197px;top:679px;width:65px;height:41px;background:#ffcccc"></div>
<svg class="abs" style="left:356px;top:679px" width="906" height="41" viewBox="0 0 906 41"><rect x="14.0" y="0" width="1" height="41" fill="#b4b4b4"/><rect x="28.0" y="0" width="1" height="41" fill="#b4b4b4"/><rect x="42.0" y="0" width="1" height="41" fill="#b4b4b4"/><rect x="56.0" y="0" width="1" height="41" fill="#b4b4b4"/><rect x="70.0" y="0" width="1" height="41" fill="#b4b4b4"/><rect x="84.0" y="0" width="1" height="41" fill="#b4b4b4"/><rect x="98.0" y="0" width="1" height="41" fill="#b4b4b4"/><rect x="112.0" y="0" width="1" height="41" fill="#b4b4b4"/><rect x="126.0" y="0" width="1" height="41" fill="#b4b4b4"/><rect x="140.0" y="0" width="1" height="41" fill="#b4b4b4"/><rect x="154.0" y="0" width="1" height="41" fill="#b4b4b4"/><rect x="168.0" y="0" width="1" height="41" fill="#b4b4b4"/><rect x="182.0" y="0" width="1" height="41" fill="#b4b4b4"/><rect x="196.0" y="0" width="1" height="41" fill="#b4b4b4"/><rect x="210.0" y="0" width="1" height="41" fill="#b4b4b4"/><rect x="224.0" y="0" width="1" height="41" fill="#b4b4b4"/><rect x="238.0" y="0" width="1" height="41" fill="#b4b4b4"/><rect x="252.0" y="0" width="1" height="41" fill="#b4b4b4"/><rect x="266.0" y="0" width="1" height="41" fill="#b4b4b4"/><rect x="280.0" y="0" width="1" height="41" fill="#b4b4b4"/><rect x="294.0" y="0" width="1" height="41" fill="#b4b4b4"/><rect x="308.0" y="0" width="1" height="41" fill="#b4b4b4"/><rect x="322.0" y="0" width="1" height="41" fill="#b4b4b4"/><rect x="336.0" y="0" width="1" height="41" fill="#b4b4b4"/><rect x="350.0" y="0" width="1" height="41" fill="#b4b4b4"/><rect x="364.0" y="0" width="1" height="41" fill="#b4b4b4"/><rect x="378.0" y="0" width="1" height="41" fill="#b4b4b4"/><rect x="392.0" y="0" width="1" height="41" fill="#b4b4b4"/><rect x="406.0" y="0" width="1" height="41" fill="#b4b4b4"/><rect x="420.0" y="0" width="1" height="41" fill="#b4b4b4"/><rect x="434.0" y="0" width="1" height="41" fill="#b4b4b4"/><rect x="448.0" y="0" width="1" height="41" fill="#b4b4b4"/><rect x="462.0" y="0" width="1" height="41" fill="#b4b4b4"/><rect x="476.0" y="0" width="1" height="41" fill="#b4b4b4"/><rect x="490.0" y="0" width="1" height="41" fill="#b4b4b4"/><rect x="504.0" y="0" width="1" height="41" fill="#b4b4b4"/><rect x="518.0" y="0" width="1" height="41" fill="#b4b4b4"/><rect x="532.0" y="0" width="1" height="41" fill="#b4b4b4"/><rect x="546.0" y="0" width="1" height="41" fill="#b4b4b4"/><rect x="560.0" y="0" width="1" height="41" fill="#b4b4b4"/><rect x="574.0" y="0" width="1" height="41" fill="#b4b4b4"/><rect x="588.0" y="0" width="1" height="41" fill="#b4b4b4"/><rect x="602.0" y="0" width="1" height="41" fill="#b4b4b4"/><rect x="616.0" y="0" width="1" height="41" fill="#b4b4b4"/><rect x="630.0" y="0" width="1" height="41" fill="#b4b4b4"/><rect x="644.0" y="0" width="1" height="41" fill="#b4b4b4"/><rect x="658.0" y="0" width="1" height="41" fill="#b4b4b4"/><rect x="672.0" y="0" width="1" height="41" fill="#b4b4b4"/><rect x="686.0" y="0" width="1" height="41" fill="#b4b4b4"/><rect x="700.0" y="0" width="1" height="41" fill="#b4b4b4"/><rect x="714.0" y="0" width="1" height="41" fill="#b4b4b4"/><rect x="728.0" y="0" width="1" height="41" fill="#b4b4b4"/><rect x="742.0" y="0" width="1" height="41" fill="#b4b4b4"/><rect x="756.0" y="0" width="1" height="41" fill="#b4b4b4"/><rect x="770.0" y="0" width="1" height="41" fill="#b4b4b4"/><rect x="784.0" y="0" width="1" height="41" fill="#b4b4b4"/><rect x="798.0" y="0" width="1" height="41" fill="#b4b4b4"/><rect x="812.0" y="0" width="1" height="41" fill="#b4b4b4"/><rect x="826.0" y="0" width="1" height="41" fill="#b4b4b4"/><rect x="840.0" y="0" width="1" height="41" fill="#b4b4b4"/><rect x="854.0" y="0" width="1" height="41" fill="#b4b4b4"/><rect x="868.0" y="0" width="1" height="41" fill="#b4b4b4"/><rect x="882.0" y="0" width="1" height="41" fill="#b4b4b4"/><rect x="896.0" y="0" width="1" height="41" fill="#b4b4b4"/></svg>
<div class="t " style="left:359.5px;top:725.18px;font-size:16.8px;line-height:20px;color:#000;">-60 dB</div>
<div class="t " style="left:749.5px;top:725.18px;font-size:16.8px;line-height:20px;color:#000;">-30 dB</div>
<div class="t " style="left:1176px;top:725.18px;font-size:16.8px;line-height:20px;color:#000;">0 dB</div>
<div class="sunk" style="left:354px;top:753px;width:909px;height:182px;"></div>
<div class="btn" style="left:367px;top:762px;width:279px;height:35px;background:#f0f0f0;"></div>
<div class="t " style="left:205.5px;top:769.73px;font-size:16.8px;line-height:20px;color:#000;width:600px;text-align:center;">Check Speaker Connections</div>
<div class="btn" style="left:368px;top:809px;width:279px;height:35px;background:#f0f0f0;"></div>
<div class="t " style="left:206.5px;top:816.73px;font-size:16.8px;line-height:20px;color:#000;width:600px;text-align:center;">Default Measurement Settings</div>
<div class="btn" style="left:368px;top:854px;width:279px;height:35px;background:#f0f0f0;"></div>
<div class="t " style="left:206.5px;top:861.73px;font-size:16.8px;line-height:20px;color:#000;width:600px;text-align:center;">Quick Measurement</div>
<div class="cb" style="left:367px;top:901px;width:20px;height:20px;"></div>
<div class="t " style="left:391px;top:902.18px;font-size:16.8px;line-height:20px;color:#000;">Notification and 10 seconds pause when recording is about to start</div>
<div class="t " style="left:786px;top:769.70px;font-size:16.75px;line-height:20px;color:#000;">Measurement Level:</div>
<div class="t " style="left:786px;top:817.25px;font-size:16.6px;line-height:20px;color:#000;">Sweep duration:</div>
<div class="btn" style="left:943px;top:767px;width:28px;height:28px;background:#f0f0f0;"></div>
<div class="t " style="left:656.0px;top:771.23px;font-size:16.8px;line-height:20px;color:#000;width:600px;text-align:center;">&lt;</div>
<div class="btn" style="left:1210px;top:767px;width:28px;height:28px;background:#f0f0f0;"></div>
<div class="t " style="left:923.0px;top:771.23px;font-size:16.8px;line-height:20px;color:#000;width:600px;text-align:center;">&gt;</div>
<div class="btn" style="left:940px;top:814px;width:28px;height:28px;background:#f0f0f0;"></div>
<div class="t " style="left:653.0px;top:818.23px;font-size:16.8px;line-height:20px;color:#000;width:600px;text-align:center;">&lt;</div>
<div class="btn" style="left:1210px;top:814px;width:28px;height:28px;background:#f0f0f0;"></div>
<div class="t " style="left:923.0px;top:818.23px;font-size:16.8px;line-height:20px;color:#000;width:600px;text-align:center;">&gt;</div>
<div class="tb" style="left:978px;top:766px;width:221px;height:26px;"></div>
<div class="t " style="left:788px;top:770.18px;font-size:16.8px;line-height:20px;color:#000;width:600px;text-align:center;">-30 dB</div>
<div class="tb" style="left:978px;top:813px;width:221px;height:26px;"></div>
<div class="t " style="left:788px;top:817.18px;font-size:16.8px;line-height:20px;color:#000;width:600px;text-align:center;">3 Seconds</div>
<div class="cb" style="left:786px;top:863px;width:20px;height:20px;"></div>
<div class="t " style="left:810px;top:864.18px;font-size:16.8px;line-height:20px;color:#000;">Apply 10 dB attenuation for tweeters</div>
<div class="sunk" style="left:1272px;top:279px;width:294px;height:309px;"></div>
<div class="abs" style="left:1278px;top:285px;width:281px;height:237px;background:#ffff80;border:1px solid;border-color:#a0a0a0 #fff #fff #a0a0a0;box-shadow:inset 1px 1px 0 #696969,inset -1px -1px 0 #e8e8c0"></div>
<div class="t " style="left:1281px;top:289.18px;font-size:16.8px;line-height:20px;color:#000;">Close down all other audio</div>
<div class="t " style="left:1281px;top:309.18px;font-size:16.8px;line-height:20px;color:#000;">applications during measurement!</div>
<div class="t " style="left:1281px;top:349.18px;font-size:16.8px;line-height:20px;color:#000;">Aim for the cleanest sounding sweep</div>
<div class="t " style="left:1281px;top:369.18px;font-size:16.8px;line-height:20px;color:#000;">possible!</div>
<div class="t " style="left:1281px;top:409.18px;font-size:16.8px;line-height:20px;color:#000;">Measure with Asio if you can!</div>
<div class="t " style="left:1281px;top:449.18px;font-size:16.8px;line-height:20px;color:#000;">Stay within the green light area!</div>
<div class="t " style="left:1282.5px;top:533.18px;font-size:16.8px;line-height:20px;color:#0000ff;">Measurement Name :</div>
<div class="tb" style="left:1278px;top:556px;width:281px;height:26px;background:#f0f0f0;"></div>
<div class="t " style="left:1281px;top:560.25px;font-size:16.6px;line-height:20px;color:#000;">4 veis 3500hz 27 apr 24_20 28</div>
<div class="btn" style="left:1273px;top:655px;width:292px;height:51px;background:#f0f0f0;"></div>
<div class="t " style="left:1118.0px;top:670.73px;font-size:16.8px;line-height:20px;color:#000;width:600px;text-align:center;">Run Measurement</div>
<div class="btn" style="left:1273px;top:712px;width:292px;height:51px;background:#f0f0f0;"></div>
<div class="t " style="left:1118.0px;top:727.73px;font-size:16.8px;line-height:20px;color:#000;width:600px;text-align:center;">View Measurement</div>
<div class="btn" style="left:1273px;top:769px;width:292px;height:51px;background:#f0f0f0;"></div>
<div class="t " style="left:1118.0px;top:784.73px;font-size:16.8px;line-height:20px;color:#000;width:600px;text-align:center;">Save Measurement</div>
<div class="btn" style="left:1273px;top:883px;width:292px;height:51px;background:#ffff80;"></div>
<div class="t " style="left:1118.5px;top:898.88px;font-size:19.4px;line-height:20px;color:#000;width:600px;text-align:center;transform:scaleY(1.07);transform-origin:50% 15.700px;">Exit</div>
<div class="abs" style="left:345px;top:949px;width:1230px;height:31px;background:#f0f0f0"></div>
<div class="t " style="left:351px;top:956.23px;font-size:18.1px;line-height:20px;color:#000;">Format and device combination is supported</div>
<div class="t " style="left:718.5px;top:956.26px;font-size:18.0px;line-height:20px;color:#000;">Mic Calibration:</div>
<div class="t " style="left:853px;top:956.26px;font-size:18.0px;line-height:20px;color:#0000ff;">28390.txt enabled</div>
<svg class="abs" style="left:1561px;top:966px" width="13" height="13" viewBox="0 0 13 13"><g fill="#a8a8a8"><rect x="10" y="1" width="2" height="2"/><rect x="6" y="5" width="2" height="2"/><rect x="10" y="5" width="2" height="2"/><rect x="2" y="9" width="2" height="2"/><rect x="6" y="9" width="2" height="2"/><rect x="10" y="9" width="2" height="2"/></g></svg>
</body>
</html>
